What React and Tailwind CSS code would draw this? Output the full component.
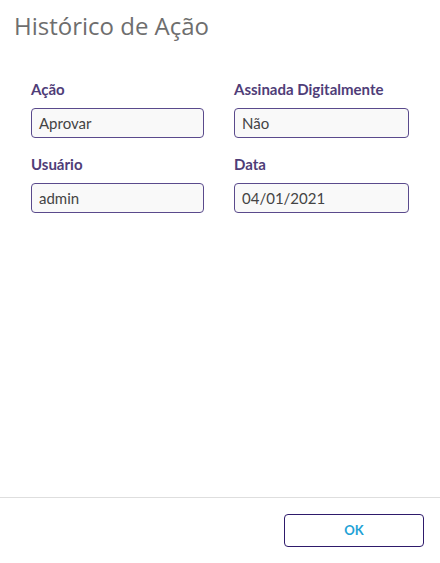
export default function App() {
  const fields = [
    { label: "Ação", value: "Aprovar" },
    { label: "Assinada Digitalmente", value: "Não" },
    { label: "Usuário", value: "admin" },
    { label: "Data", value: "04/01/2021" },
  ];

  return (
    <div className="w-[440px] h-[563px] bg-white flex flex-col overflow-hidden">
      {/* Cabeçalho */}
      <h1 className="pl-[14px] pt-[10px] text-[24px] leading-[32px] text-[#6e6e6e] font-['Open_Sans',sans-serif]">
        Histórico de Ação
      </h1>

      {/* Campos */}
      <div className="flex-1 pt-[38px] pl-[31px] pr-[32px]">
        <div className="grid grid-cols-[173px_175px] gap-x-[30px] gap-y-[17px]">
          {fields.map((f) => (
            <div key={f.label} className="flex flex-col">
              <label className="text-[15px] leading-[18px] font-bold text-[#4f3d78] font-['Lato',sans-serif]">
                {f.label}
              </label>
              <div className="mt-[10px] h-[30px] px-[7px] flex items-center rounded-[4px] border border-[#5a4a8c] bg-[#f9f9f9] text-[15px] text-[#444] font-['Lato',sans-serif]">
                {f.value}
              </div>
            </div>
          ))}
        </div>
      </div>

      {/* Rodapé */}
      <div className="border-t border-[#dedede] h-[66px] flex items-start justify-end pr-[16px] pt-[16px]">
        <button
          type="button"
          className="w-[140px] h-[33px] rounded-[4px] border border-[#2e1a6b] text-[#1fa2d6] text-[13px] font-bold font-['Lato',sans-serif]"
        >
          OK
        </button>
      </div>
    </div>
  );
}
